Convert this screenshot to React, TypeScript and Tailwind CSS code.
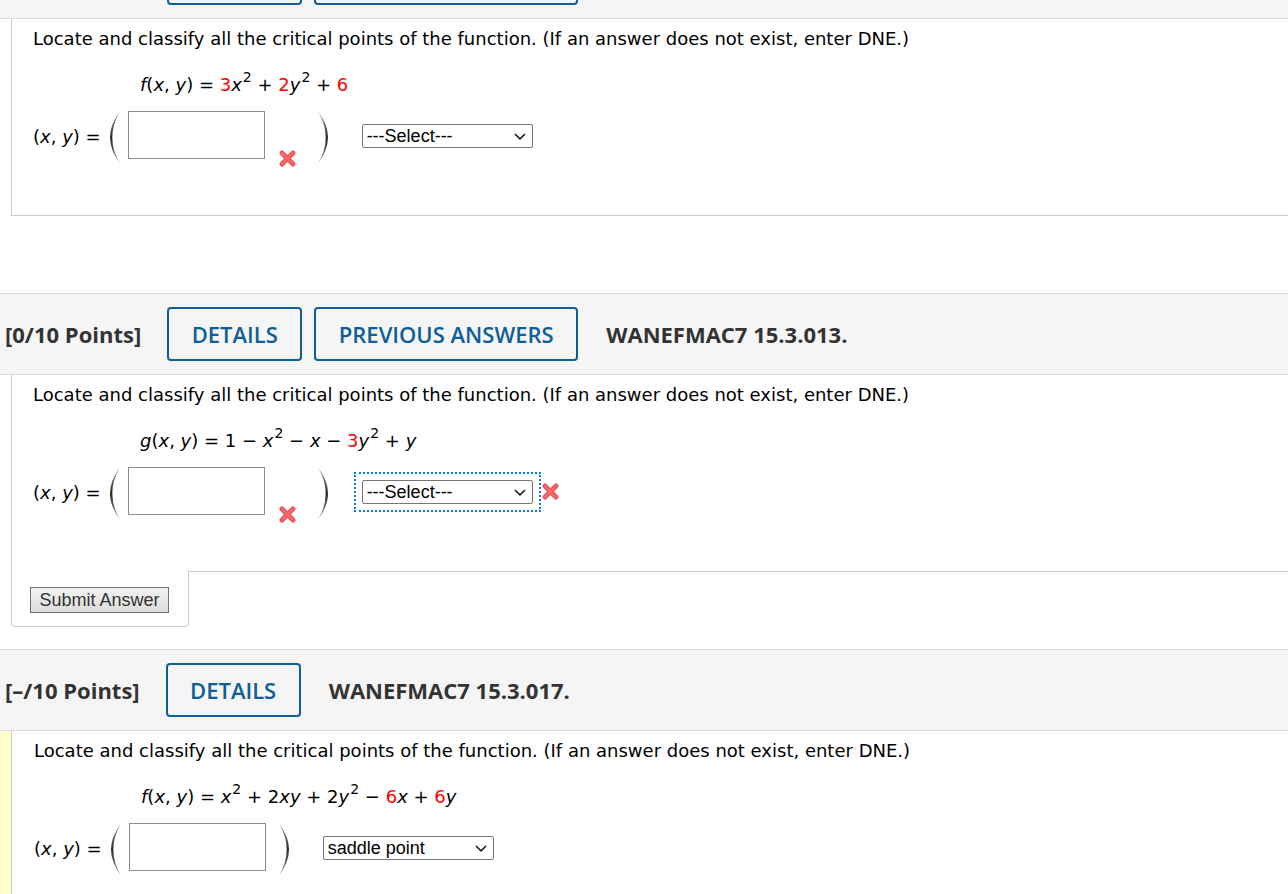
import React from "react";

const V = "font-['DejaVu_Sans',Verdana,sans-serif]";
const OS = "font-['Open_Sans',sans-serif]";
const AR = "font-['Liberation_Sans',Arial,sans-serif]";

function Paren({ right }: { right?: boolean }) {
  const id = right ? "pgr" : "pgl";
  return (
    <svg width="12" height="53" viewBox="0 0 12 53" className="block shrink-0">
      <defs>
        <linearGradient id={id} x1="0" y1="0" x2="0" y2="53" gradientUnits="userSpaceOnUse">
          <stop offset="0" stopColor="#a8a8a8" />
          <stop offset="0.5" stopColor="#262626" />
          <stop offset="1" stopColor="#a8a8a8" />
        </linearGradient>
      </defs>
      <path
        d={
          right
            ? "M1 0.5 Q21 26.5 1 52.5 Q16.4 26.5 1 0.5 Z"
            : "M11 0.5 Q-9 26.5 11 52.5 Q-4.4 26.5 11 0.5 Z"
        }
        fill={`url(#${id})`}
      />
    </svg>
  );
}

function RedX() {
  return (
    <svg width="19" height="19" viewBox="0 0 19 19" className="block">
      <path
        d="M4 4 L15 15 M15 4 L4 15"
        stroke="#f0575b"
        strokeWidth="5"
        strokeLinecap="round"
        fill="none"
      />
      <path
        d="M4 4 L15 15 M15 4 L4 15"
        stroke="#f88a8c"
        strokeWidth="1.4"
        strokeLinecap="round"
        fill="none"
        opacity="0.55"
      />
    </svg>
  );
}

function Sel({ value }: { value: string }) {
  return (
    <div className="relative h-[24px] w-[171px]">
      <select
        defaultValue={value}
        className={`block h-full w-full appearance-none rounded-[2px] border border-[#767676] bg-white pl-[4px] text-[18px] leading-[20px] text-black ${AR}`}
      >
        <option>{value}</option>
      </select>
      <svg
        className="pointer-events-none absolute right-[7px] top-[9px]"
        width="12"
        height="7"
        viewBox="0 0 12 7"
      >
        <path d="M1 1 L6 5.8 L11 1" stroke="#1f1f1f" strokeWidth="1.7" fill="none" />
      </svg>
    </div>
  );
}

function Sup({ children }: { children: React.ReactNode }) {
  return <sup className="ml-[1px] text-[14px] -top-[9px]">{children}</sup>;
}

function AnswerRow({
  xInput,
  xSelect,
  focus,
  value,
}: {
  xInput?: boolean;
  xSelect?: boolean;
  focus?: boolean;
  value: string;
}) {
  return (
    <div className="mt-[14px] flex items-start">
      <span className="mt-[14px] whitespace-pre text-[18px] leading-[24px]">
        (<i>x</i>, <i>y</i>) =
      </span>
      <div className="ml-[8px]">
        <Paren />
      </div>
      <div className="ml-[7px] h-[48px] w-[137px] shrink-0 border border-[#8c8c8c] bg-white" />
      {xInput ? (
        <div className="ml-[13px] mt-[38px]">
          <RedX />
        </div>
      ) : null}
      <div className={xInput ? "ml-[20px]" : "ml-[12px]"}>
        <Paren right />
      </div>
      <div
        className={
          focus
            ? "ml-[25px] mt-[5px] border-2 border-dotted border-[#0a78d6] p-[6px]"
            : "ml-[25px] mt-[5px] border-2 border-transparent p-[6px]"
        }
      >
        <Sel value={value} />
      </div>
      {xSelect ? (
        <div className="mt-[15px]">
          <RedX />
        </div>
      ) : null}
    </div>
  );
}

function Header({
  points,
  code,
  prev,
  className,
}: {
  points: string;
  code: string;
  prev?: boolean;
  className?: string;
}) {
  return (
    <div
      className={`flex h-[82px] items-center border-y border-[#dcdcdc] bg-[#f5f5f5] pl-[5px] ${OS} ${className ?? ""}`}
    >
      <span className="text-[22px] font-bold text-[#333]">{points}</span>
      <button className="ml-[26px] flex h-[54px] w-[135px] items-center justify-center rounded-[4px] border-2 border-[#0e5f96] text-[22px] font-semibold text-[#0e5f96]">
        DETAILS
      </button>
      {prev ? (
        <button className="ml-[12px] flex h-[54px] w-[264px] items-center justify-center rounded-[4px] border-2 border-[#0e5f96] text-[22px] font-semibold text-[#0e5f96]">
          PREVIOUS ANSWERS
        </button>
      ) : null}
      <span className="ml-[28px] text-[22px] font-bold text-[#333]">{code}</span>
    </div>
  );
}

const Q = "Locate and classify all the critical points of the function. (If an answer does not exist, enter DNE.)";
const R = "text-[#ff0000]";

export default function App() {
  return (
    <div className={`min-h-[894px] w-full overflow-hidden bg-white text-black ${V}`}>
      <Header points="[0/10 Points]" code="WANEFMAC7 15.3.012." prev className="-mt-[63px]" />

      {/* Question 1 */}
      <div className="ml-[11px] h-[197px] border-b border-l border-[#cccccc] pl-[21px] pt-[8px]">
        <p className="text-[18px] leading-[24px]">{Q}</p>
        <p className="ml-[107px] mt-[22px] whitespace-pre text-[18px] leading-[24px]">
          <i>f</i>(<i>x</i>, <i>y</i>) = <span className={R}>3</span>
          <i>x</i>
          <Sup>2</Sup> + <span className={R}>2</span>
          <i>y</i>
          <Sup>2</Sup> + <span className={R}>6</span>
        </p>
        <AnswerRow xInput value="---Select---" />
      </div>

      {/* Question 2 */}
      <Header points="[0/10 Points]" code="WANEFMAC7 15.3.013." prev className="mt-[77px]" />
      <div className="ml-[11px] h-[196px] border-l border-[#cccccc] pl-[21px] pt-[8px]">
        <p className="text-[18px] leading-[24px]">{Q}</p>
        <p className="ml-[107px] mt-[22px] whitespace-pre text-[18px] leading-[24px]">
          <i>g</i>(<i>x</i>, <i>y</i>) = 1 − <i>x</i>
          <Sup>2</Sup> − <i>x</i> − <span className={R}>3</span>
          <i>y</i>
          <Sup>2</Sup> + <i>y</i>
        </p>
        <AnswerRow xInput xSelect focus value="---Select---" />
      </div>
      <div className="ml-[11px] flex">
        <div className="h-[56px] w-[178px] rounded-b-[4px] border-x border-b border-[#cccccc] pl-[18px] pt-[16px]">
          <button
            className={`h-[26px] w-[139px] border border-[#707070] bg-gradient-to-b from-[#f2f2f2] to-[#dddddd] text-[18px] leading-[20px] text-[#333] ${AR}`}
          >
            Submit Answer
          </button>
        </div>
        <div className="flex-1 border-t border-[#cccccc]" />
      </div>

      {/* Question 3 */}
      <Header points="[–/10 Points]" code="WANEFMAC7 15.3.017." className="mt-[22px]" />
      <div className="flex">
        <div className="w-[11px] shrink-0 bg-[#ffffcc]" />
        <div className="h-[200px] flex-1 border-l border-[#cccccc] pl-[22px] pt-[8px]">
          <p className="text-[18px] leading-[24px]">{Q}</p>
          <p className="ml-[107px] mt-[22px] whitespace-pre text-[18px] leading-[24px]">
            <i>f</i>(<i>x</i>, <i>y</i>) = <i>x</i>
            <Sup>2</Sup> + 2<i>xy</i> + 2<i>y</i>
            <Sup>2</Sup> − <span className={R}>6</span>
            <i>x</i> + <span className={R}>6</span>
            <i>y</i>
          </p>
          <AnswerRow value="saddle point" />
        </div>
      </div>
    </div>
  );
}
